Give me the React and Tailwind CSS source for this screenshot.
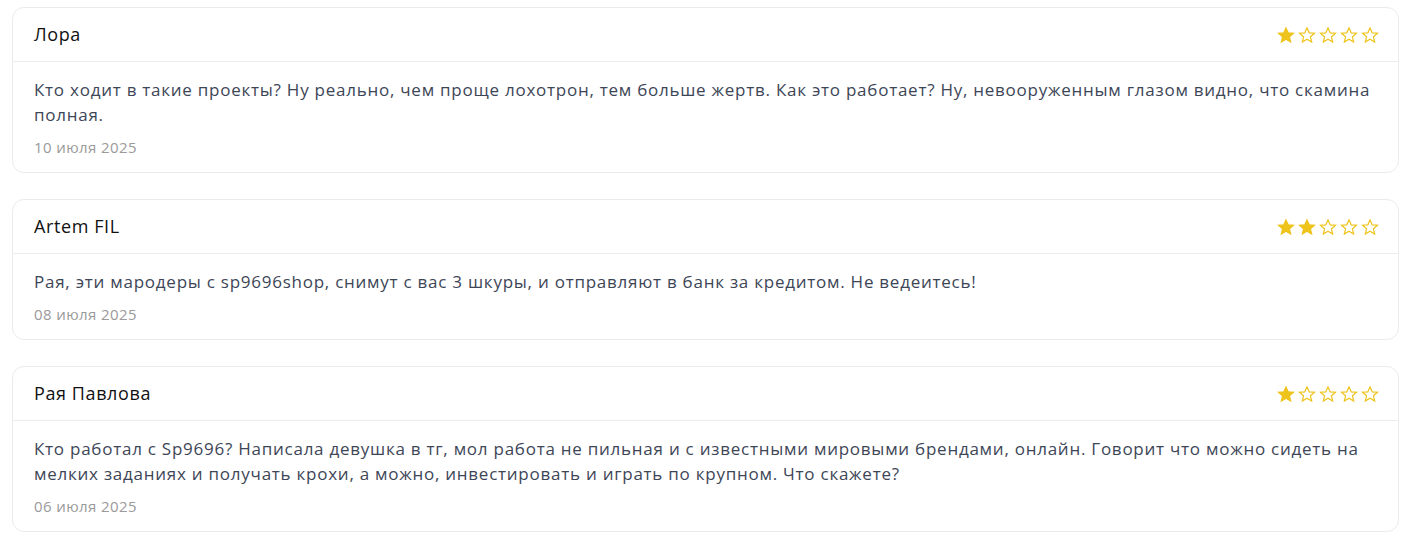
import React from 'react';

const reviews = [
  {
    name: 'Лора',
    rating: 1,
    text: 'Кто ходит в такие проекты? Ну реально, чем проще лохотрон, тем больше жертв. Как это работает? Ну, невооруженным глазом видно, что скамина полная.',
    date: '10 июля 2025',
  },
  {
    name: 'Artem FIL',
    rating: 2,
    text: 'Рая, эти мародеры с sp9696shop, снимут с вас 3 шкуры, и отправляют в банк за кредитом. Не ведеитесь!',
    date: '08 июля 2025',
  },
  {
    name: 'Рая Павлова',
    rating: 1,
    text: 'Кто работал с Sp9696? Написала девушка в тг, мол работа не пильная и с известными мировыми брендами, онлайн. Говорит что можно сидеть на мелких заданиях и получать крохи, а можно, инвестировать и играть по крупном. Что скажете?',
    date: '06 июля 2025',
  },
];

const Star = ({ filled }) => (
  <svg viewBox="0 0 24 24" className="w-[18px] h-[18px]" fill={filled ? '#eec31c' : 'none'} stroke="#eec31c" strokeWidth="1.6" strokeLinejoin="miter">
    <path d="M12 2.5l2.9 6.6 7.1.6-5.4 4.7 1.6 7-6.2-3.7-6.2 3.7 1.6-7L2 9.7l7.1-.6z" />
  </svg>
);

const ReviewCard = ({ name, rating, text, date }) => (
  <div className="bg-white border border-[#ebebeb] rounded-xl">
    {/* шапка: имя и звёзды */}
    <div className="flex items-center justify-between h-[54px] pl-[21px] pr-[19px] border-b border-[#ececec]">
      <span className="text-[18px] font-medium text-[#111] tracking-[0.6px]">{name}</span>
      <div className="flex items-center gap-[3px]">
        {[1, 2, 3, 4, 5].map((i) => (
          <Star key={i} filled={i <= rating} />
        ))}
      </div>
    </div>
    <div className="pl-[21px] pr-[19px] pt-[15px] pb-[15px]">
      <p className="text-[17px] leading-[25px] text-[#3d4657] tracking-[0.75px]">{text}</p>
      <p className="mt-[10px] text-[15px] leading-[20px] text-[#9a9a9a] tracking-[0.4px]">{date}</p>
    </div>
  </div>
);

export default function App() {
  return (
    <div className="min-h-screen bg-white pt-[7px] pl-[12px] pr-[18px]" style={{ fontFamily: '"Open Sans", sans-serif' }}>
      <div className="flex flex-col gap-[26px]">
        {reviews.map((r) => (
          <ReviewCard key={r.name} {...r} />
        ))}
      </div>
    </div>
  );
}
